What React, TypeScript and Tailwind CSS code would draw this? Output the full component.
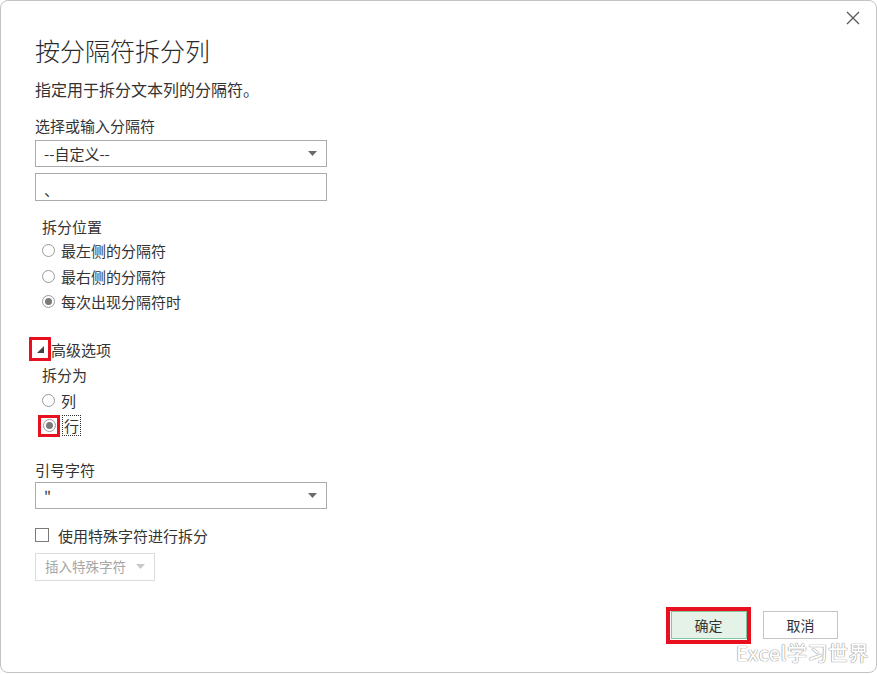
import type { ReactNode } from "react";

const font = { fontFamily: '"Microsoft YaHei", "Noto Sans CJK SC", "Noto Sans", sans-serif' };

function Caret({ muted = false }: { muted?: boolean }) {
  return (
    <svg width="9" height="5" viewBox="0 0 9 5" className="shrink-0">
      <path d="M0 0 L9 0 L4.5 5 Z" fill={muted ? "#c8c8c8" : "#6b6b6b"} />
    </svg>
  );
}

function Select({ value }: { value: string }) {
  return (
    <div className="flex h-[27px] w-[292px] items-center justify-between border border-[#ababab] bg-white pl-[8px] pr-[9px] text-[15px] text-[#333]">
      <span className="leading-none">{value}</span>
      <Caret />
    </div>
  );
}

function Radio({ checked, label, boxed = false }: { checked?: boolean; label: string; boxed?: boolean }) {
  const dot = (
    <span className="flex h-[13px] w-[13px] items-center justify-center rounded-full border border-[#9a9a9a] bg-white">
      {checked ? <span className="h-[7px] w-[7px] rounded-full bg-[#7a7a7a]" /> : null}
    </span>
  );
  return (
    <div className="flex h-[25.5px] items-center gap-[6px] pl-[7px] text-[15px] text-[#333]">
      {boxed ? (
        <span className="-ml-[4px] -mr-[4px] flex h-[22px] w-[22px] items-center justify-center border-[3px] border-[#e8101f]">
          {dot}
        </span>
      ) : (
        dot
      )}
      <span className={boxed ? "border border-dotted border-[#333] px-[1px] leading-[19px]" : "leading-none"}>{label}</span>
    </div>
  );
}

function Label({ children, indent = false }: { children: ReactNode; indent?: boolean }) {
  return <div className={`text-[15px] leading-[20px] text-[#333] ${indent ? "pl-[7px]" : ""}`}>{children}</div>;
}

export default function App() {
  return (
    <div className="h-[674px] w-[877px] bg-white" style={font}>
      <div className="relative flex h-[673px] w-[877px] flex-col rounded-[8px] border border-[#c3c3c3] bg-white pl-[34px]">
        <button className="absolute right-[15px] top-[9px] flex h-[16px] w-[16px] items-center justify-center">
          <svg width="14" height="14" viewBox="0 0 14 14">
            <path d="M1 1 L13 13 M13 1 L1 13" stroke="#555" strokeWidth="1.2" />
          </svg>
        </button>

        <h1 className="mt-[34px] text-[25px] font-light leading-[30px] text-[#2b2b2b]">按分隔符拆分列</h1>
        <div className="mt-[14px] text-[16px] leading-[20px] text-[#333]">指定用于拆分文本列的分隔符。</div>

        <div className="mt-[17px]">
          <Label>选择或输入分隔符</Label>
        </div>
        <div className="mt-[4px]">
          <Select value="--自定义--" />
        </div>
        <div className="mt-[6px] flex h-[28px] w-[292px] items-end border border-[#ababab] bg-white pb-[3px] pl-[8px] text-[15px] leading-none text-[#333]">
          、
        </div>

        <div className="mt-[16px]">
          <Label indent>拆分位置</Label>
        </div>
        <div className="mt-[1px] flex flex-col">
          <Radio label="最左侧的分隔符" />
          <Radio label="最右侧的分隔符" />
          <Radio checked label="每次出现分隔符时" />
        </div>

        <div className="mt-[22px] flex h-[25.5px] items-center">
          <span className="-ml-[6px] flex h-[24px] w-[22px] items-center justify-center border-[3px] border-[#e8101f]">
            <svg width="7" height="7" viewBox="0 0 7 7">
              <path d="M7 0 L7 7 L0 7 Z" fill="#444" />
            </svg>
          </span>
          <span className="text-[15px] leading-none text-[#333]">高级选项</span>
        </div>
        <div className="flex h-[25.5px] items-center pl-[7px] text-[15px] leading-none text-[#333]">拆分为</div>
        <Radio label="列" />
        <Radio checked boxed label="行" />

        <div className="mt-[21px]">
          <Label>引号字符</Label>
        </div>
        <div className="mt-[2px]">
          <Select value={'"'} />
        </div>

        <div className="mt-[19px] flex items-center gap-[9px] text-[15px] leading-none text-[#333]">
          <span className="h-[14px] w-[14px] border border-[#7a7a7a] bg-white" />
          <span>使用特殊字符进行拆分</span>
        </div>

        <div className="mt-[10px] flex h-[28px] w-[120px] items-center justify-center gap-[10px] border border-[#dcdcdc] bg-white text-[13.5px] leading-none text-[#a6a6a6]">
          <span>插入特殊字符</span>
          <Caret muted />
        </div>

        <div className="mt-[30px] flex justify-end pr-[38px]">
          <span className="-mt-[4px] mr-[12px] flex h-[37px] w-[85px] items-center justify-center border-[4px] border-[#e8101f]">
            <button className="flex h-[28px] w-[76px] items-center justify-center border border-[#86c69e] bg-[#e4f2e8] text-[14px] leading-none text-[#333]">
              确定
            </button>
          </span>
          <button className="flex h-[28px] w-[75px] items-center justify-center border border-[#c6c6c6] bg-white text-[14px] leading-none text-[#333]">
            取消
          </button>
        </div>

        <div className="absolute bottom-[9px] right-[7px] text-[20px] font-medium leading-none tracking-[0.5px] text-white [text-shadow:0_0_1px_#7a7a7a,0_0_1px_#7a7a7a]">
          Excel学习世界
        </div>
      </div>
    </div>
  );
}
